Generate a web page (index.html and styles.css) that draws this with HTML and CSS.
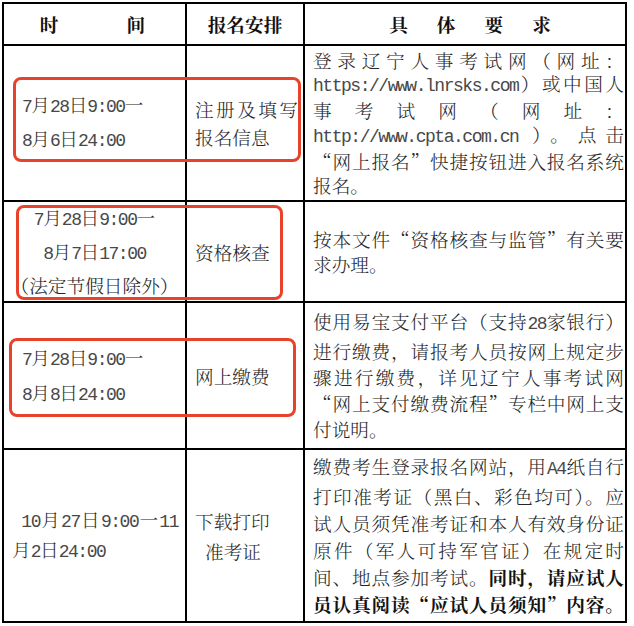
FILE: index.html
```html
<!DOCTYPE html>
<html lang="zh-CN">
<head>
<meta charset="utf-8">
<title>报名安排</title>
<link rel="stylesheet" href="styles.css">
</head>
<body>
<div class="page">
  <table class="sched">
    <colgroup><col class="c1"><col class="c2"><col class="c3"></colgroup>
    <tr class="r0">
      <th class="hd1"><span>时</span><span class="hgap">间</span></th>
      <th class="hd2">报名安排</th>
      <th class="hd3"><span>具</span><span>体</span><span>要</span><span>求</span></th>
    </tr>
    <tr class="r1">
      <td class="time ind lh31">
        <div class="ln"><span class="m">7</span>月<span class="m">28</span>日<span class="m">9:00</span>一</div>
        <div class="ln"><span class="m">8</span>月<span class="m">6</span>日<span class="m">24:00</span></div>
      </td>
      <td class="step lh28">
        <div class="ln j">注册及填写</div>
        <div class="ln">报名信息</div>
      </td>
      <td class="req lh24">
        <div class="ln j">登录辽宁人事考试网（网址：</div>
        <div class="ln j"><span class="m">https://www.lnrsks.com</span>）或中国人</div>
        <div class="ln j">事考试网（网址：</div>
        <div class="ln j"><span class="m">http://www.cpta.com.cn</span> ）。点击</div>
        <div class="ln j">“网上报名”快捷按钮进入报名系统</div>
        <div class="ln">报名。</div>
      </td>
    </tr>
    <tr class="r2">
      <td class="time center lh31">
        <div class="ln"><span class="m">7</span>月<span class="m">28</span>日<span class="m">9:00</span>一</div>
        <div class="ln"><span class="m">8</span>月<span class="m">7</span>日<span class="m">17:00</span></div>
        <div class="ln"><span class="op">（</span>法定节假日除外<span class="cp">）</span></div>
      </td>
      <td class="step lh28">
        <div class="ln">资格核查</div>
      </td>
      <td class="req lh25">
        <div class="ln j">按本文件“资格核查与监管”有关要</div>
        <div class="ln">求办理。</div>
      </td>
    </tr>
    <tr class="r3">
      <td class="time ind lh32">
        <div class="ln"><span class="m">7</span>月<span class="m">28</span>日<span class="m">9:00</span>一</div>
        <div class="ln"><span class="m">8</span>月<span class="m">8</span>日<span class="m">24:00</span></div>
      </td>
      <td class="step lh28">
        <div class="ln">网上缴费</div>
      </td>
      <td class="req lh26">
        <div class="ln j">使用易宝支付平台（支持<span class="m">28</span>家银行）</div>
        <div class="ln j">进行缴费，请报考人员按网上规定步</div>
        <div class="ln j">骤进行缴费，详见辽宁人事考试网</div>
        <div class="ln j">“网上支付缴费流程”专栏中网上支</div>
        <div class="ln">付说明。</div>
      </td>
    </tr>
    <tr class="r4">
      <td class="time lh27">
        <div class="ln j first"><span class="m">10</span>月<span class="m">27</span>日<span class="m">9:00</span>一<span class="m">11</span></div>
        <div class="ln">月<span class="m">2</span>日<span class="m">24:00</span></div>
      </td>
      <td class="step lh30">
        <div class="ln">下载打印</div>
        <div class="ln sub">准考证</div>
      </td>
      <td class="req lh27">
        <div class="ln j">缴费考生登录报名网站，用<span class="m">A4</span>纸自行</div>
        <div class="ln j">打印准考证（黑白、彩色均可）。应</div>
        <div class="ln j">试人员须凭准考证和本人有效身份证</div>
        <div class="ln j">原件（军人可持军官证）在规定时</div>
        <div class="ln j">间、地点参加考试。<b>同时，请应试人</b></div>
        <div class="ln j"><b>员认真阅读“应试人员须知”内容。</b></div>
      </td>
    </tr>
  </table>
  <div class="mark mark1"></div>
  <div class="mark mark2"></div>
  <div class="mark mark3"></div>
</div>
</body>
</html>
```

FILE: styles.css
```css
* { box-sizing: border-box; }
html, body { margin: 0; padding: 0; background: #fff; }
body {
  font-family: "Noto Serif CJK SC", "Noto Sans CJK SC", serif;
  font-size: 18.67px;
  font-weight: 300;
  color: #262626;
}
.page {
  position: relative;
  width: 634px;
  height: 626px;
  padding: 2px 0 0 2px;
}
.sched {
  border-collapse: collapse;
  table-layout: fixed;
  width: 623px;
}
.sched th, .sched td {
  border: 2px solid #000;
  padding: 0;
  vertical-align: middle;
  font-weight: 300;
}
col.c1 { width: 183px; }
col.c2 { width: 118px; }
col.c3 { width: 322px; }

.sched .r0 th { height: 42px; font-weight: bold; color: #111; line-height: 24px; }
.sched .r1 td { height: 156px; }
.sched .r2 td { height: 101px; }
.sched .r3 td { height: 147px; }
.sched .r4 td { height: 173px; }

.sched .hd1 { text-align: center; padding-right: 4px; }
.hd1 .hgap { margin-left: 68px; }
.sched .hd2 { text-align: center; }
.sched .hd3 { text-align: center; padding-left: 10px; }
.hd3 span + span { margin-left: 29px; }

.m {
  font-family: "Liberation Mono", monospace;
  font-size: 18px;
  font-weight: normal;
  letter-spacing: -1.47px;
  color: #484848;
}
b { font-weight: bold; color: #111; }

.j { text-align: justify; text-align-last: justify; }

.sched .time { padding: 0 7px 0 8px; text-align: left; }
.sched .time.ind { padding-left: 18px; }
.sched .time.center { text-align: center; padding: 0 6px; }
.time .first { text-indent: 9.33px; }
.op { margin-left: -9.33px; }
.cp { margin-right: -9.33px; }

.sched .step { padding: 0 5px 0 8px; text-align: left; }
.step .sub { padding-left: 10px; }

.sched .req { padding: 0 1px 0 8px; }

.lh24 { line-height: 23.8px; }
.lh25 { line-height: 25px; }
.lh26 { line-height: 26.2px; }
.lh27 { line-height: 27px; }
.lh28 { line-height: 28px; }
.lh30 { line-height: 30px; }
.lh31 { line-height: 31px; }
.lh32 { line-height: 32px; }

.mark {
  position: absolute;
  border: 3px solid #e8432a;
  border-radius: 8px;
}
.mark1 { left: 13px; top: 77px; width: 288px; height: 85px; }
.mark2 { left: 16px; top: 205px; width: 267px; height: 95px; }
.mark3 { left: 9px; top: 338px; width: 287px; height: 79px; }
```
